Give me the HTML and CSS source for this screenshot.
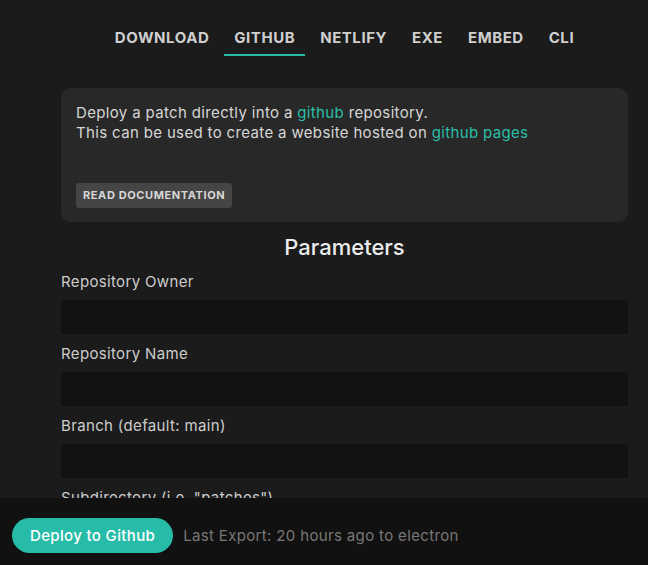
FILE: index.html
```html
<!DOCTYPE html>
<html>
<head>
<meta charset="utf-8">
<link rel="stylesheet" href="styles.css">
</head>
<body>
<div class="page">
  <nav class="tabs">
    <span class="tab">Download</span>
    <span class="tab active">Github</span>
    <span class="tab">Netlify</span>
    <span class="tab">Exe</span>
    <span class="tab">Embed</span>
    <span class="tab">CLI</span>
  </nav>
  <div class="card">
    <p class="desc">Deploy a patch directly into a <a class="link">github</a> repository.<br>This can be used to create a website hosted on <a class="link">github pages</a></p>
    <span class="docbtn">Read documentation</span>
  </div>
  <h2 class="heading">Parameters</h2>
  <div class="field">
    <label class="label">Repository Owner</label>
    <div class="input"></div>
  </div>
  <div class="field">
    <label class="label">Repository Name</label>
    <div class="input"></div>
  </div>
  <div class="field">
    <label class="label">Branch (default: main)</label>
    <div class="input"></div>
  </div>
  <div class="field">
    <label class="label">Subdirectory (i.e. "patches")</label>
    <div class="input"></div>
  </div>
</div>
<div class="footer">
  <span class="deploy">Deploy to Github</span>
  <span class="last">Last Export: 20 hours ago to electron</span>
</div>
</body>
</html>
```

FILE: styles.css
```css
html, body {
  margin: 0;
  padding: 0;
  height: 100%;
  overflow: hidden;
}
body {
  background: #1b1b1b;
  font-family: Inter, "Noto Sans", sans-serif;
  color: #d4d4d4;
  font-size: 15px;
  letter-spacing: 0.35px;
}
.page {
  padding: 28px 20px 0 61px;
}
.tabs {
  display: flex;
  justify-content: center;
  gap: 5px;
}
.tab {
  text-transform: uppercase;
  font-weight: 700;
  font-size: 15px;
  letter-spacing: 0.55px;
  line-height: 20px;
  padding: 0 10px 6px;
  border-bottom: 2px solid transparent;
  color: #cfcfcf;
}
.tab.active {
  border-bottom-color: #27bca8;
}
.card {
  margin-top: 32px;
  background: #282828;
  border-radius: 9px;
  padding: 15px 15px 14px;
}
.desc {
  margin: 0;
  line-height: 20px;
  color: #d6d6d6;
}
.link {
  color: #2bbfa9;
}
.docbtn {
  display: inline-block;
  margin-top: 40px;
  background: #454545;
  border-radius: 3px;
  color: #d8d8d8;
  font-size: 11px;
  font-weight: 700;
  text-transform: uppercase;
  letter-spacing: 0.6px;
  line-height: 25px;
  padding: 0 7px;
}
.heading {
  margin: 10px 0 0;
  text-align: center;
  font-size: 22px;
  font-weight: 500;
  letter-spacing: 0;
  line-height: 30px;
  color: #ececec;
}
.field {
  display: flex;
  flex-direction: column;
  gap: 8px;
  margin-top: 10px;
}
.label {
  line-height: 20px;
  color: #cdcdcd;
}
.input {
  height: 34px;
  background: #121212;
}
.footer {
  position: fixed;
  left: 0;
  right: 0;
  bottom: 0;
  height: 67px;
  box-sizing: border-box;
  background: #111111;
  display: flex;
  align-items: center;
  gap: 10px;
  padding: 8px 12px 0;
}
.deploy {
  background: #27bca8;
  color: #ffffff;
  font-weight: 500;
  line-height: 35px;
  padding: 0 18px;
  border-radius: 18px;
}
.last {
  color: #787878;
}
```
